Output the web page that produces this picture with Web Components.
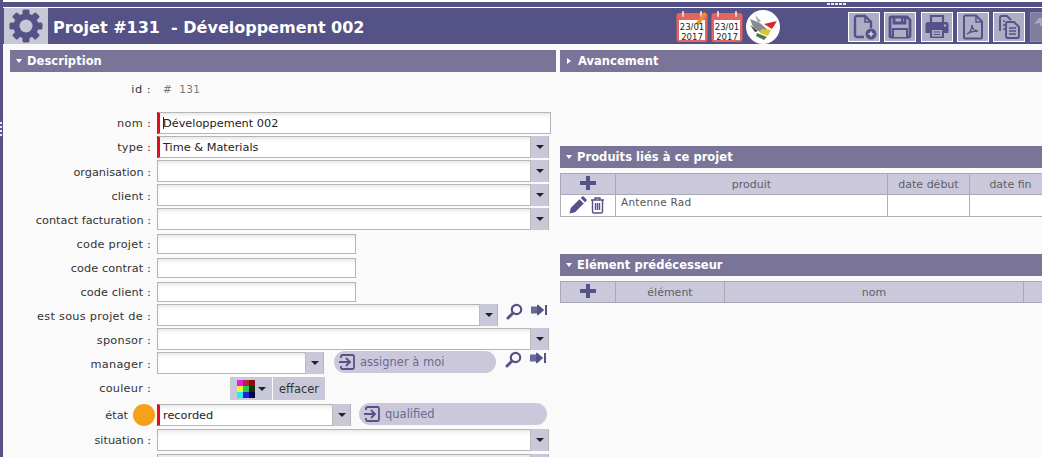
<!DOCTYPE html>
<html><head><meta charset="utf-8"><style>
html,body{margin:0;height:457px;width:1042px;overflow:hidden;background:#fafafa;font-family:"DejaVu Sans",sans-serif;font-size:11.3px;color:#333}
.page{display:flex;height:457px;width:1042px;overflow:hidden}
.strip{width:3px;background:#545286;flex:none;display:flex;padding-top:122px;box-sizing:border-box}
.strip i{display:block;width:2px;height:15px;background:repeating-linear-gradient(180deg,#e8e8f0 0 2px,#545286 2px 4px)}
.main{flex:1;min-width:0;display:flex;flex-direction:column}
.cols{display:grid;grid-template-columns:546px 1fr;column-gap:4px;padding:6px 0 0 7px;min-width:0}
.col{display:flex;flex-direction:column;min-width:0}
.form{display:flex;flex-direction:column;padding-top:5px}
.sp{height:10px;flex:none}
</style></head><body>
<template id="t-header"><style>
:host{display:flex;flex-direction:column;flex:none}
.top{height:5px;background:#545286;border-top:2px solid #fff;display:flex}
.grip{width:20px;height:2px;margin:1px 0 0 824px;background:repeating-linear-gradient(90deg,#e8e8f0 0 3px,#545286 3px 4px)}
.line{height:1px;background:#fff}
.bar{height:36px;background:#545286;display:flex;align-items:center;overflow:hidden}
.gear{width:44px;height:36px;background:#c8c7d6;display:flex;align-items:center;justify-content:center;flex:none;margin-left:1px}
h1{margin:2px 0 0 5px;font:bold 16px "DejaVu Sans",sans-serif;color:#fff;white-space:pre;width:623px;flex:none}
.slot{display:flex;align-items:center;flex:none}
.cal{width:32px;height:33px;margin-right:3px;flex:none}
.logo{width:34px;height:34px;margin:1px 0 0 0;flex:none}
.tools{display:flex;gap:4px;margin:2px 0 0 68px;flex:none}
.t{width:30px;height:28px;border:1px solid #fff;background:#aeadc6;display:flex;align-items:center;justify-content:center;flex:none}
.t.dim{background:#7f7da0;border-color:#8f8dab;align-items:flex-start;justify-content:flex-start}
</style>
<div class="top"><div class="grip"></div></div><div class="line"></div>
<div class="bar"><div class="gear"><svg width="34" height="34" viewBox="0 0 34 34"><g fill="#545286"><circle cx="17" cy="17" r="12.5"/><rect x="13.5" y="0.5" width="7" height="33" rx="1.5"/><rect x="13.5" y="0.5" width="7" height="33" rx="1.5" transform="rotate(45 17 17)"/><rect x="13.5" y="0.5" width="7" height="33" rx="1.5" transform="rotate(90 17 17)"/><rect x="13.5" y="0.5" width="7" height="33" rx="1.5" transform="rotate(135 17 17)"/></g><circle cx="17" cy="17" r="6.5" fill="#c8c7d6"/></svg></div>
<h1>Projet #131  - Développement 002</h1>
<div class="slot">
<svg class="cal" viewBox="0 0 32 33"><rect x="0.5" y="3" width="31" height="29" rx="3" fill="#e2655f"/><rect x="3" y="10" width="26" height="20" fill="#fff"/><rect x="6" y="1" width="2" height="6" rx="1" fill="#f5d0c8"/><rect x="24" y="1" width="2" height="6" rx="1" fill="#f5d0c8"/><path d="M20 13l8-11 3 2-8 11z" fill="#ee8f2e"/><text x="16" y="20" font-size="8.500" text-anchor="middle" font-family="DejaVu Sans" fill="#222">23/01</text><text x="16" y="30" font-size="8.500" text-anchor="middle" font-family="DejaVu Sans" fill="#222">2017</text></svg>
<svg class="cal" viewBox="0 0 32 33"><rect x="0.5" y="3" width="31" height="29" rx="3" fill="#e2655f"/><rect x="3" y="10" width="26" height="20" fill="#fff"/><rect x="6" y="1" width="2" height="6" rx="1" fill="#f5d0c8"/><rect x="24" y="1" width="2" height="6" rx="1" fill="#f5d0c8"/><text x="16" y="20" font-size="8.500" text-anchor="middle" font-family="DejaVu Sans" fill="#222">23/01</text><text x="16" y="30" font-size="8.500" text-anchor="middle" font-family="DejaVu Sans" fill="#222">2017</text></svg>
<svg class="logo" viewBox="0 0 34 34"><circle cx="17" cy="17" r="17" fill="#fff"/><path d="M4 9l10 4 9 8-6 3-10-7z" fill="#8a8a92"/><path d="M9 5l6 6-3 2z" fill="#a9a9b0"/><path d="M18 14l13-3-5 8z" fill="#d9232e"/><path d="M15 19l10 1-3 6-8-3z" fill="#d8c530"/><path d="M11 23l10 4-3 3-8-4z" fill="#4d7a48"/><path d="M4 15l8 6-3 1z" fill="#3d3d45"/></svg>
</div>
<div class="tools">
<div class="t"><svg width="26" height="26" viewBox="0 0 26 26" fill="none" stroke="#545286" stroke-width="2.4"><path d="M13 23H6a2 2 0 0 1-2-2V4a2 2 0 0 1 2-2h8l6 6v6"/><path d="M14 2l0 6h6" stroke-width="1.600"/><circle cx="20" cy="20" r="5.500" fill="#545286" stroke="none"/><path d="M20 17.500v5M17.500 20h5" stroke="#d8d8e4" stroke-width="1.500"/></svg></div>
<div class="t"><svg width="26" height="26" viewBox="0 0 26 26" fill="none" stroke="#545286" stroke-width="2.800"><path d="M3 4a1 1 0 0 1 1-1h16l3 3v16a1 1 0 0 1-1 1H4a1 1 0 0 1-1-1z"/><path d="M7 3v6h11V3"/><path d="M5 14h16v9H5z" fill="#545286" stroke="none"/><path d="M7 16h12v7H7z" fill="#aeadc6" stroke="none"/><path d="M15 4v4" stroke-width="2"/></svg></div>
<div class="t" style="margin-left:1px"><svg width="26" height="26" viewBox="0 0 26 26"><path d="M7 8V2h12v6" fill="none" stroke="#545286" stroke-width="2.200"/><path d="M4 8h18a2.500 2.500 0 0 1 2.500 2.500V19H20v5H6v-5H1.500v-8.500A2.500 2.500 0 0 1 4 8z" fill="#545286"/><rect x="8" y="16" width="10" height="6.500" fill="#aeadc6"/><path d="M9.500 18h7M9.500 20.500h7" stroke="#545286" stroke-width="1"/><circle cx="21" cy="11.500" r="1.200" fill="#aeadc6"/></svg></div>
<div class="t"><svg width="26" height="26" viewBox="0 0 26 26" fill="none" stroke="#545286" stroke-width="2"><path d="M6 1.500h10l6 6V23a1.500 1.500 0 0 1-1.500 1.500h-15A1.500 1.500 0 0 1 4 23V3a1.500 1.500 0 0 1 1.500-1.500z"/><path d="M16 1.500V8h6" stroke-width="1.500"/><path d="M7 20c3-1 5-5 5-9 0 4 3 6 6 6-4 0-8 1-11 3z" stroke-width="1.500"/></svg></div>
<div class="t"><svg width="26" height="26" viewBox="0 0 26 26" fill="#aeadc6" stroke="#545286" stroke-width="1.900"><path d="M4 17V4a2 2 0 0 1 2-2h5l4 4"/><path d="M7 7h2M7 11h2M7 15h2" stroke-width="1.500"/><path d="M10 10a2 2 0 0 1 2-2h6l5 5v9a2 2 0 0 1-2 2h-9a2 2 0 0 1-2-2z"/><path d="M13 14h7M13 17h7M13 20h7" stroke-width="1.500"/></svg></div>
<div class="t dim" style="margin-left:1px"><svg width="12" height="12" viewBox="0 0 12 12" style="margin:3px 0 0 2px"><path d="M1 8L6 2h6v8H7V7z" fill="#a9a7c2"/></svg></div>
</div></div></template>

<template id="t-section"><style>
:host{display:block}
.h{height:22px;background:#7a7499;color:#fff;font-weight:bold;font-size:11.5px;display:flex;align-items:center;padding-left:6px;gap:5px;white-space:nowrap;letter-spacing:.04px}
.a{flex:none;width:0;height:0}
:host(:not([closed])) .a{border-left:3.500px solid transparent;border-right:3.500px solid transparent;border-top:4px solid #fff}
:host([closed]) .a{border-top:3.500px solid transparent;border-bottom:3.500px solid transparent;border-left:4px solid #fff;margin-left:1px;margin-right:2px}
</style><div class="h"><span class="a"></span><span id="l"></span></div><slot></slot></template>

<template id="t-row"><style>
:host{display:flex;height:24px;align-items:center;flex:none;white-space:nowrap}
.l{width:141px;flex:none;text-align:right;color:#333;font-size:11.3px;padding-right:var(--pr,0);padding-top:var(--lt,0);letter-spacing:var(--ls,0);box-sizing:border-box}
.c{display:flex;align-items:center;margin-left:6px;min-width:0}
</style><span class="l" id="l"></span><span class="c"><slot></slot></span></template>

<template id="t-field"><style>
:host{display:flex;flex:none;height:22px;box-sizing:border-box;background:#fff;border:1px solid #b5b5b5;box-shadow:inset 0 4px 4px -2px #e6e6e6;align-items:center;font-size:11.3px;color:#222}
:host([req]){border-left:3px solid #e00f1a}
.v{flex:1;padding-left:3px;white-space:nowrap;overflow:hidden}
.b{display:none;width:17px;align-self:stretch;background:#c9c8d8;border-left:1px solid #bbb;align-items:center;justify-content:center;margin:-1px 0}
:host([combo]) .b{display:flex}
.b i{width:0;height:0;border-left:4px solid transparent;border-right:4px solid transparent;border-top:4px solid #222}
.cur{display:none;width:1px;height:12px;background:#222;margin-right:-1px}
:host([cursor]) .cur{display:block;margin-left:3px}
:host([cursor]) .v{padding-left:0}
</style><span class="cur"></span><span class="v"><slot></slot></span><span class="b"><i></i></span></template>

<template id="t-pill"><style>
:host{display:flex;flex:none;height:22px;border-radius:11px;background:#cac8da;color:#6d6a94;align-items:center;padding-left:4px;box-sizing:border-box;gap:4px;font-size:11.5px;white-space:nowrap;margin-bottom:2px}
svg{flex:none}
</style><svg width="18" height="18" viewBox="0 0 18 18" fill="none" stroke="#545286" stroke-width="1.800"><path d="M3 5V3.500A1.500 1.500 0 0 1 4.500 2h10A1.500 1.500 0 0 1 16 3.500v11a1.500 1.500 0 0 1-1.500 1.500h-10A1.500 1.500 0 0 1 3 14.500V13"/><path d="M1 9h10M8 5l4 4-4 4"/></svg><slot></slot></template>

<template id="t-links"><style>
:host{display:inline-flex;flex:none;align-items:flex-start;gap:8px;margin-bottom:7px}
</style><svg width="17" height="17" viewBox="0 0 17 17" fill="none"><circle cx="10.500" cy="6.500" r="4.700" stroke="#545286" stroke-width="2.200"/><path d="M6.500 10.500L2 15" stroke="#545286" stroke-width="3" stroke-linecap="round"/></svg><svg width="16" height="17" viewBox="0 0 16 17"><path d="M0 3.500h7V1.500l6 5.500-6 5.500v-2H0z" fill="#6a6896"/><path d="M6 1.500l7 5.500-7 5.500z" fill="#545286"/><rect x="14" y="2" width="2" height="10" fill="#545286"/></svg></template>

<template id="t-grid"><style>
:host{display:block;overflow:hidden;margin-top:5px;width:482px}
table{border-collapse:collapse;table-layout:fixed;font-size:11px;width:var(--w)}
th{height:21px;padding:0;background:#cac8da;border:1px solid #a9a9b5;font-weight:normal;color:#5f5f68;box-sizing:border-box}
td{height:22px;padding:0;background:#fff;border:1px solid #b0b0b0;color:#555;box-sizing:border-box;vertical-align:top;letter-spacing:.25px;font-size:10.500px}
td.n{padding:1px 0 0 5px}
.ic{display:flex;gap:3px;justify-content:center;padding-top:1px;margin-left:-3px}
</style><table id="tb"></table></template>

<div class="page"><div class="strip"><i></i></div><div class="main">
<pm-header></pm-header>
<div class="cols">
<div class="col">
<pm-section label="Description">
<div class="form">
<pm-row label="id :" style="--ls:.5px"><span style="color:#777;padding-left:6px;font-size:10.500px;white-space:pre;letter-spacing:.3px;display:block">#  131</span></pm-row>
<div class="sp"></div>
<pm-row label="nom :" style="--ls:.3px"><pm-field req cursor style="width:394px">Développement 002</pm-field></pm-row>
<pm-row label="type :" style="--ls:.2px"><pm-field req combo style="width:392px">Time &amp; Materials</pm-field></pm-row>
<pm-row label="organisation :" style="--lt:2px"><pm-field combo style="width:392px"></pm-field></pm-row>
<pm-row label="client :" style="--lt:2px;--ls:.15px"><pm-field combo style="width:392px"></pm-field></pm-row>
<pm-row label="contact facturation :" style="--lt:2px"><pm-field combo style="width:392px"></pm-field></pm-row>
<pm-row label="code projet :" style="--lt:2px;--ls:.25px"><pm-field style="width:199px;height:20px;margin-top:2px"></pm-field></pm-row>
<pm-row label="code contrat :" style="--lt:2px;--ls:.1px"><pm-field style="width:199px;height:20px;margin-top:2px"></pm-field></pm-row>
<pm-row label="code client :" style="--lt:2px;--ls:.1px"><pm-field style="width:199px;height:20px;margin-top:2px"></pm-field></pm-row>
<pm-row label="est sous projet de :" style="--lt:2px;--ls:.28px"><pm-field combo style="width:341px"></pm-field><pm-links style="margin-left:8px"></pm-links></pm-row>
<pm-row label="sponsor :" style="--lt:2px;--ls:.25px"><pm-field combo style="width:392px"></pm-field></pm-row>
<pm-row label="manager :" style="--lt:2px;--ls:.25px"><pm-field combo style="width:167px"></pm-field><pm-pill style="width:162px;margin-left:10px">assigner à moi</pm-pill><pm-links style="margin-left:9px"></pm-links></pm-row>
<pm-row label="couleur :" style="height:27px;--ls:.25px"><pm-color></pm-color></pm-row>
<pm-row label="état" style="height:26px;--pr:23px"><pm-dot></pm-dot><pm-field req combo style="width:194px">recorded</pm-field><pm-pill style="width:188px;margin-left:8px">qualified</pm-pill></pm-row>
<pm-row label="situation :"><pm-field combo style="width:392px"></pm-field></pm-row>
<pm-row label=" "><pm-field combo style="width:392px;background:#f4f4f4;margin-top:2px"></pm-field></pm-row>
</div>
</pm-section>
</div>
<div class="col">
<pm-section label="Avancement" closed></pm-section>
<div style="height:74px;flex:none"></div>
<pm-section label="Produits liés à ce projet"><pm-grid cols="55,272,82,82" heads="+|produit|date début|date fin" row="Antenne Rad"></pm-grid></pm-section>
<div style="height:37px;flex:none"></div>
<pm-section label="Elément prédécesseur"><pm-grid cols="55,109,299,40" heads="+|élément|nom|"></pm-grid></pm-section>
</div>
</div></div></div>
<script>
function T(id){return document.getElementById(id).content.cloneNode(true)}
class B extends HTMLElement{constructor(n){super();this.attachShadow({mode:'open'}).appendChild(T(n))}}
customElements.define('pm-header',class extends B{constructor(){super('t-header')}});
customElements.define('pm-section',class extends B{constructor(){super('t-section')}connectedCallback(){this.shadowRoot.getElementById('l').textContent=this.getAttribute('label')}});
customElements.define('pm-row',class extends B{constructor(){super('t-row')}connectedCallback(){this.shadowRoot.getElementById('l').textContent=this.getAttribute('label')}});
customElements.define('pm-field',class extends B{constructor(){super('t-field')}});
customElements.define('pm-pill',class extends B{constructor(){super('t-pill')}});
customElements.define('pm-links',class extends B{constructor(){super('t-links')}});
customElements.define('pm-dot',class extends HTMLElement{constructor(){super();this.attachShadow({mode:'open'}).innerHTML='<style>:host{display:block;flex:none;width:22px;height:22px;border-radius:50%;background:#f5a11c;margin-left:-24px;margin-right:2px}</style>'}});
customElements.define('pm-color',class extends HTMLElement{constructor(){super();this.attachShadow({mode:'open'}).innerHTML=`<style>:host{display:flex;gap:1px;margin-left:73px;flex:none}
.a,.b{height:23px;background:#c9c8d8;display:flex;align-items:center;justify-content:center;box-sizing:border-box}
.a{width:42px;gap:3px}.b{width:52px;font-size:11.5px;color:#333}
i{width:0;height:0;border-left:4px solid transparent;border-right:4px solid transparent;border-top:4px solid #222}</style>
<div class="a"><svg width="18" height="18" viewBox="0 0 3 3" shape-rendering="crispEdges"><rect width="1" height="1" fill="#e020e0"/><rect x="1" width="1" height="1" fill="#c02040"/><rect x="2" width="1" height="1" fill="#801010"/><rect y="1" width="1" height="1" fill="#f0f040"/><rect x="1" y="1" width="1" height="1" fill="#20d040"/><rect x="2" y="1" width="1" height="1" fill="#103010"/><rect y="2" width="1" height="1" fill="#20f0f0"/><rect x="1" y="2" width="1" height="1" fill="#2020e0"/><rect x="2" y="2" width="1" height="1" fill="#000040"/></svg><i></i></div><div class="b">effacer</div>`}});
const plus='<svg width="18" height="16" viewBox="0 0 18 16"><path d="M7 1h4v5h6v4h-6v5H7v-5H1V6h6z" fill="#545286"/></svg>';
customElements.define('pm-grid',class extends B{constructor(){super('t-grid')}connectedCallback(){
const c=this.getAttribute('cols').split(','),h=this.getAttribute('heads').split('|'),r=this.getAttribute('row'),tb=this.shadowRoot.getElementById('tb');
tb.style.setProperty('--w',c.reduce((a,b)=>a+ +b,0)+'px');
let s='<colgroup>'+c.map(w=>`<col style="width:${w}px">`).join('')+'</colgroup><tr>'+h.map(x=>`<th>${x==='+'?plus:x}</th>`).join('')+'</tr>';
if(r)s+='<tr><td><div class="ic"><svg width="18" height="18" viewBox="0 0 18 18"><path d="M0.500 17.500l1.200-5.500L10.500 3.200l4.300 4.300-8.800 8.800zM11.700 2l1.500-1.500a1 1 0 0 1 1.400 0l2.900 2.900a1 1 0 0 1 0 1.400L16 6.300z" fill="#545286"/></svg><svg width="15" height="18" viewBox="0 0 15 18" fill="none" stroke="#545286" stroke-width="1.400"><path d="M1 4h13M5 4V2h5v2M2.500 4v11.500a1.500 1.500 0 0 0 1.500 1.500h7a1.500 1.500 0 0 0 1.500-1.500V4M5.500 7v7M7.500 7v7M9.500 7v7"/></svg></div></td><td class="n">'+r+'</td><td></td><td></td></tr>';
tb.innerHTML=s}});
</script></body></html>
